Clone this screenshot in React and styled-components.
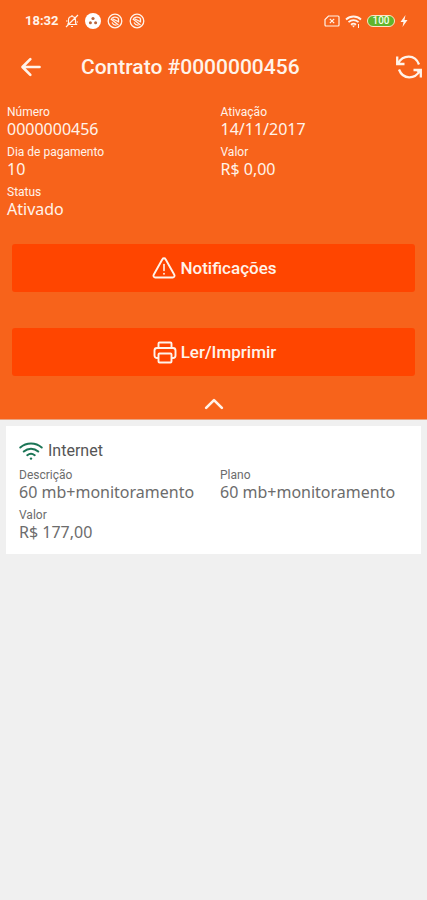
import { useState } from 'react';
import styled, { createGlobalStyle } from 'styled-components';
import { IoArrowBack, IoChevronUp } from 'react-icons/io5';

const GlobalStyle = createGlobalStyle`
* {
    box-sizing: border-box;
}

body {
    margin: 0;
    background: #f0f0f0;
    font-family: Roboto, "Liberation Sans", sans-serif;
}
`;

const Panel = styled.section`
background: #f7631b;
color: #fff3ea;
border-bottom: 1px solid #e9a583;
`;

const StatusBar = styled.div`
display: flex;
align-items: center;
justify-content: space-between;
height: 42px;
padding: 0 19px 0 25px;
`;

const StatusGroup = styled.div`
display: flex;
align-items: center;
gap: ${({ $gap }) => $gap}px;
`;

const Clock = styled.span`
font-size: 13px;
font-weight: 700;
line-height: 16px;
`;

const Battery = styled.span`
width: 28px;
height: 12px;
border: 1px solid #ffe3c4;
border-radius: 6px;
background: #5fb52c;
color: #f4ffe8;
font-size: 10px;
font-weight: 500;
line-height: 10px;
text-align: center;
`;

const Header = styled.header`
display: flex;
align-items: center;
height: 50px;
padding: 0 4px 0 17px;
`;

const Title = styled.h1`
flex: 1;
margin: 0 0 0 36px;
font-size: 21px;
font-weight: 500;
line-height: 24px;
`;

const IconButton = styled.button`
display: flex;
align-items: center;
justify-content: center;
padding: 0;
border: 0;
background: transparent;
color: #fff3ea;
cursor: pointer;
`;

const Fields = styled.dl`
display: grid;
grid-template-columns: 1fr 1fr;
row-gap: 6px;
margin: 0;
`;

const ContractFields = styled(Fields)`
padding: 13px 0 25px;

> div {
    padding-left: 7px;
}
`;

const FieldLabel = styled.dt`
font-size: 12px;
line-height: 14px;
`;

const FieldValue = styled.dd`
margin: 0;
font-family: "Noto Sans", "Open Sans", sans-serif;
font-size: 16px;
line-height: 20px;
`;

const Actions = styled.div`
display: flex;
flex-direction: column;
gap: 36px;
padding: 0 12px;
`;

const ActionButton = styled.button`
display: flex;
align-items: center;
justify-content: center;
gap: 4px;
height: 48px;
padding: 0 4px 0 6px;
border: 0;
border-radius: 3px;
background: #ff4500;
color: #fff3ea;
font-family: inherit;
font-size: 17px;
font-weight: 500;
cursor: pointer;
`;

const Toggle = styled(IconButton)`
width: 100%;
height: 43px;
padding-top: 13px;

svg {
    transform: ${({ $open }) => ($open ? 'none' : 'rotate(180deg)')};
}
`;

const Card = styled.article`
margin: 6px 6px 0;
padding: 14px 0 12px 13px;
background: #fff;
color: #6c6c6c;
`;

const CardTitle = styled.h2`
display: flex;
align-items: center;
gap: 5px;
margin: 0 0 6px;
color: #555;
font-size: 16px;
font-weight: 400;
line-height: 22px;

svg {
    color: #1b7556;
}
`;

const BellOffIcon = () => (
    <svg width="14" height="14" viewBox="0 0 14 14" fill="none" stroke="currentColor" strokeWidth="1.2">
        <path d="M3 10.5h8.5L10.5 9V6a3.5 3.5 0 0 0-7 0v3L2.5 10.5M6 12.5h2M7 2.5V1M1 13 13 1" />
        <path d="M1 7h1.5M11.5 8H13" />
    </svg>
);

const DotsBadgeIcon = () => (
    <svg width="16" height="16" viewBox="0 0 16 16">
        <circle cx="8" cy="8" r="8" fill="#fff" />
        <g fill="#b9653b">
            <circle cx="8" cy="5.5" r="1.6" />
            <circle cx="5.4" cy="9.8" r="1.5" />
            <circle cx="10.6" cy="9.8" r="1.5" />
        </g>
    </svg>
);

const RingBadgeIcon = () => (
    <svg width="16" height="16" viewBox="0 0 16 16" fill="none" stroke="currentColor" strokeWidth="1.3">
        <circle cx="8" cy="8" r="6.8" />
        <path d="M4 7c1-3 5-4 7.5-1.5M4.5 6.5 11.5 12M6 6l5 2.5M5 9.5c1 2 2.5 2.8 4.5 2.5M11.5 5.5v4" />
    </svg>
);

const NoSimIcon = () => (
    <svg width="16" height="12" viewBox="0 0 16 12" fill="none" stroke="currentColor" strokeWidth="1.2">
        <path d="M4.5 1H14a1 1 0 0 1 1 1v8a1 1 0 0 1-1 1H2a1 1 0 0 1-1-1V4.5z" />
        <path d="m5.8 3.8 4.4 4.4M10.2 3.8 5.8 8.2" />
    </svg>
);

const SignalIcon = () => (
    <svg width="17" height="13" viewBox="0 0 17 13" fill="none" stroke="currentColor" strokeWidth="1.8">
        <path d="M1 4.5c4.3-4 10.7-4 15 0M3.5 7.2c3-2.7 7-2.7 10 0M6 9.7c1.6-1.3 3.4-1.3 5 0" />
        <path d="m7 10.5 1.5 2 1.5-2z" fill="currentColor" stroke="none" />
        <path d="M13.5 9v4" strokeWidth="1" />
    </svg>
);

const BoltIcon = () => (
    <svg width="8" height="12" viewBox="0 0 8 12" fill="currentColor">
        <path d="M5.5 0 0.5 7H3.5L2.5 12 7.5 5H4.5z" />
    </svg>
);

const SyncIcon = () => (
    <svg width="28" height="26" viewBox="0 0 28 26" fill="none" stroke="currentColor" strokeWidth="2.3">
        <path d="M3 9.5C8 0.5 20 0 24 10.5" />
        <path d="M25 16.5C20 25.5 8 26 4 15.5" />
        <path d="M2.2 2.5V10h7.3M25.8 23.5V16h-7.3" />
        <path d="M2 6.5V10h5zM26 20.5V16h-6z" fill="currentColor" stroke="none" />
    </svg>
);

const WarningIcon = () => (
    <svg width="24" height="24" viewBox="0 0 24 24" fill="none" stroke="currentColor" strokeWidth="1.9" strokeLinejoin="round" strokeLinecap="round">
        <path d="M10.4 3.3 1.7 18.8a1.8 1.8 0 0 0 1.6 2.7h17.4a1.8 1.8 0 0 0 1.6-2.7L13.6 3.3a1.8 1.8 0 0 0-3.2 0z" />
        <path d="M12 8.5v6" strokeWidth="1.6" />
        <path d="M12 17.7v.1" />
    </svg>
);

const PrinterIcon = () => (
    <svg width="24" height="24" viewBox="0 0 24 24" fill="none" stroke="currentColor" strokeWidth="1.9" strokeLinejoin="round">
        <path d="M5.5 8V3.5a1 1 0 0 1 1-1h11a1 1 0 0 1 1 1V8" />
        <path d="M5.5 18H4a2.5 2.5 0 0 1-2.5-2.5v-5A2.5 2.5 0 0 1 4 8h16a2.5 2.5 0 0 1 2.5 2.5v5A2.5 2.5 0 0 1 20 18h-1.5" />
        <path d="M6.500 13.5h11a1 1 0 0 1 1 1v7a1 1 0 0 1-1 1h-11a1 1 0 0 1-1-1v-7a1 1 0 0 1 1-1z" />
    </svg>
);

const WifiIcon = () => (
    <svg width="24" height="20" viewBox="0 0 24 20" fill="none" stroke="currentColor" strokeWidth="2" strokeLinecap="round">
        <path d="M1.3 6.5c6-5.3 15.4-5.3 21.4 0M4.8 10.5c4.2-3.7 10.2-3.7 14.4 0M8.3 14.2c2.3-1.9 5.1-1.9 7.4 0" />
        <circle cx="12" cy="17.6" r="1.2" fill="currentColor" stroke="none" />
    </svg>
);

const Field = ({ label, value }) => (
    <div>
        <FieldLabel>{label}</FieldLabel>
        <FieldValue>{value}</FieldValue>
    </div>
);

const App = () => {
    const [open, setOpen] = useState(true);

    return (
        <>
            <GlobalStyle />
            <Panel>
                <StatusBar>
                    <StatusGroup $gap={6}>
                        <Clock>18:32</Clock>
                        <BellOffIcon />
                        <DotsBadgeIcon />
                        <RingBadgeIcon />
                        <RingBadgeIcon />
                    </StatusGroup>
                    <StatusGroup $gap={5}>
                        <NoSimIcon />
                        <SignalIcon />
                        <Battery>100</Battery>
                        <BoltIcon />
                    </StatusGroup>
                </StatusBar>
                <Header>
                    <IconButton aria-label="Voltar">
                        <IoArrowBack size={28} />
                    </IconButton>
                    <Title>Contrato #0000000456</Title>
                    <IconButton aria-label="Atualizar">
                        <SyncIcon />
                    </IconButton>
                </Header>
                {open && (
                    <>
                        <ContractFields>
                            <Field label="Número" value="0000000456" />
                            <Field label="Ativação" value="14/11/2017" />
                            <Field label="Dia de pagamento" value="10" />
                            <Field label="Valor" value="R$ 0,00" />
                            <Field label="Status" value="Ativado" />
                        </ContractFields>
                        <Actions>
                            <ActionButton>
                                <WarningIcon />
                                Notificações
                            </ActionButton>
                            <ActionButton>
                                <PrinterIcon />
                                Ler/Imprimir
                            </ActionButton>
                        </Actions>
                    </>
                )}
                <Toggle $open={open} aria-label="Mostrar detalhes" aria-expanded={open} onClick={() => setOpen(!open)}>
                    <IoChevronUp size={28} />
                </Toggle>
            </Panel>
            <Card>
                <CardTitle>
                    <WifiIcon />
                    Internet
                </CardTitle>
                <Fields>
                    <Field label="Descrição" value="60 mb+monitoramento" />
                    <Field label="Plano" value="60 mb+monitoramento" />
                    <Field label="Valor" value="R$ 177,00" />
                </Fields>
            </Card>
        </>
    );
};

export default App;
